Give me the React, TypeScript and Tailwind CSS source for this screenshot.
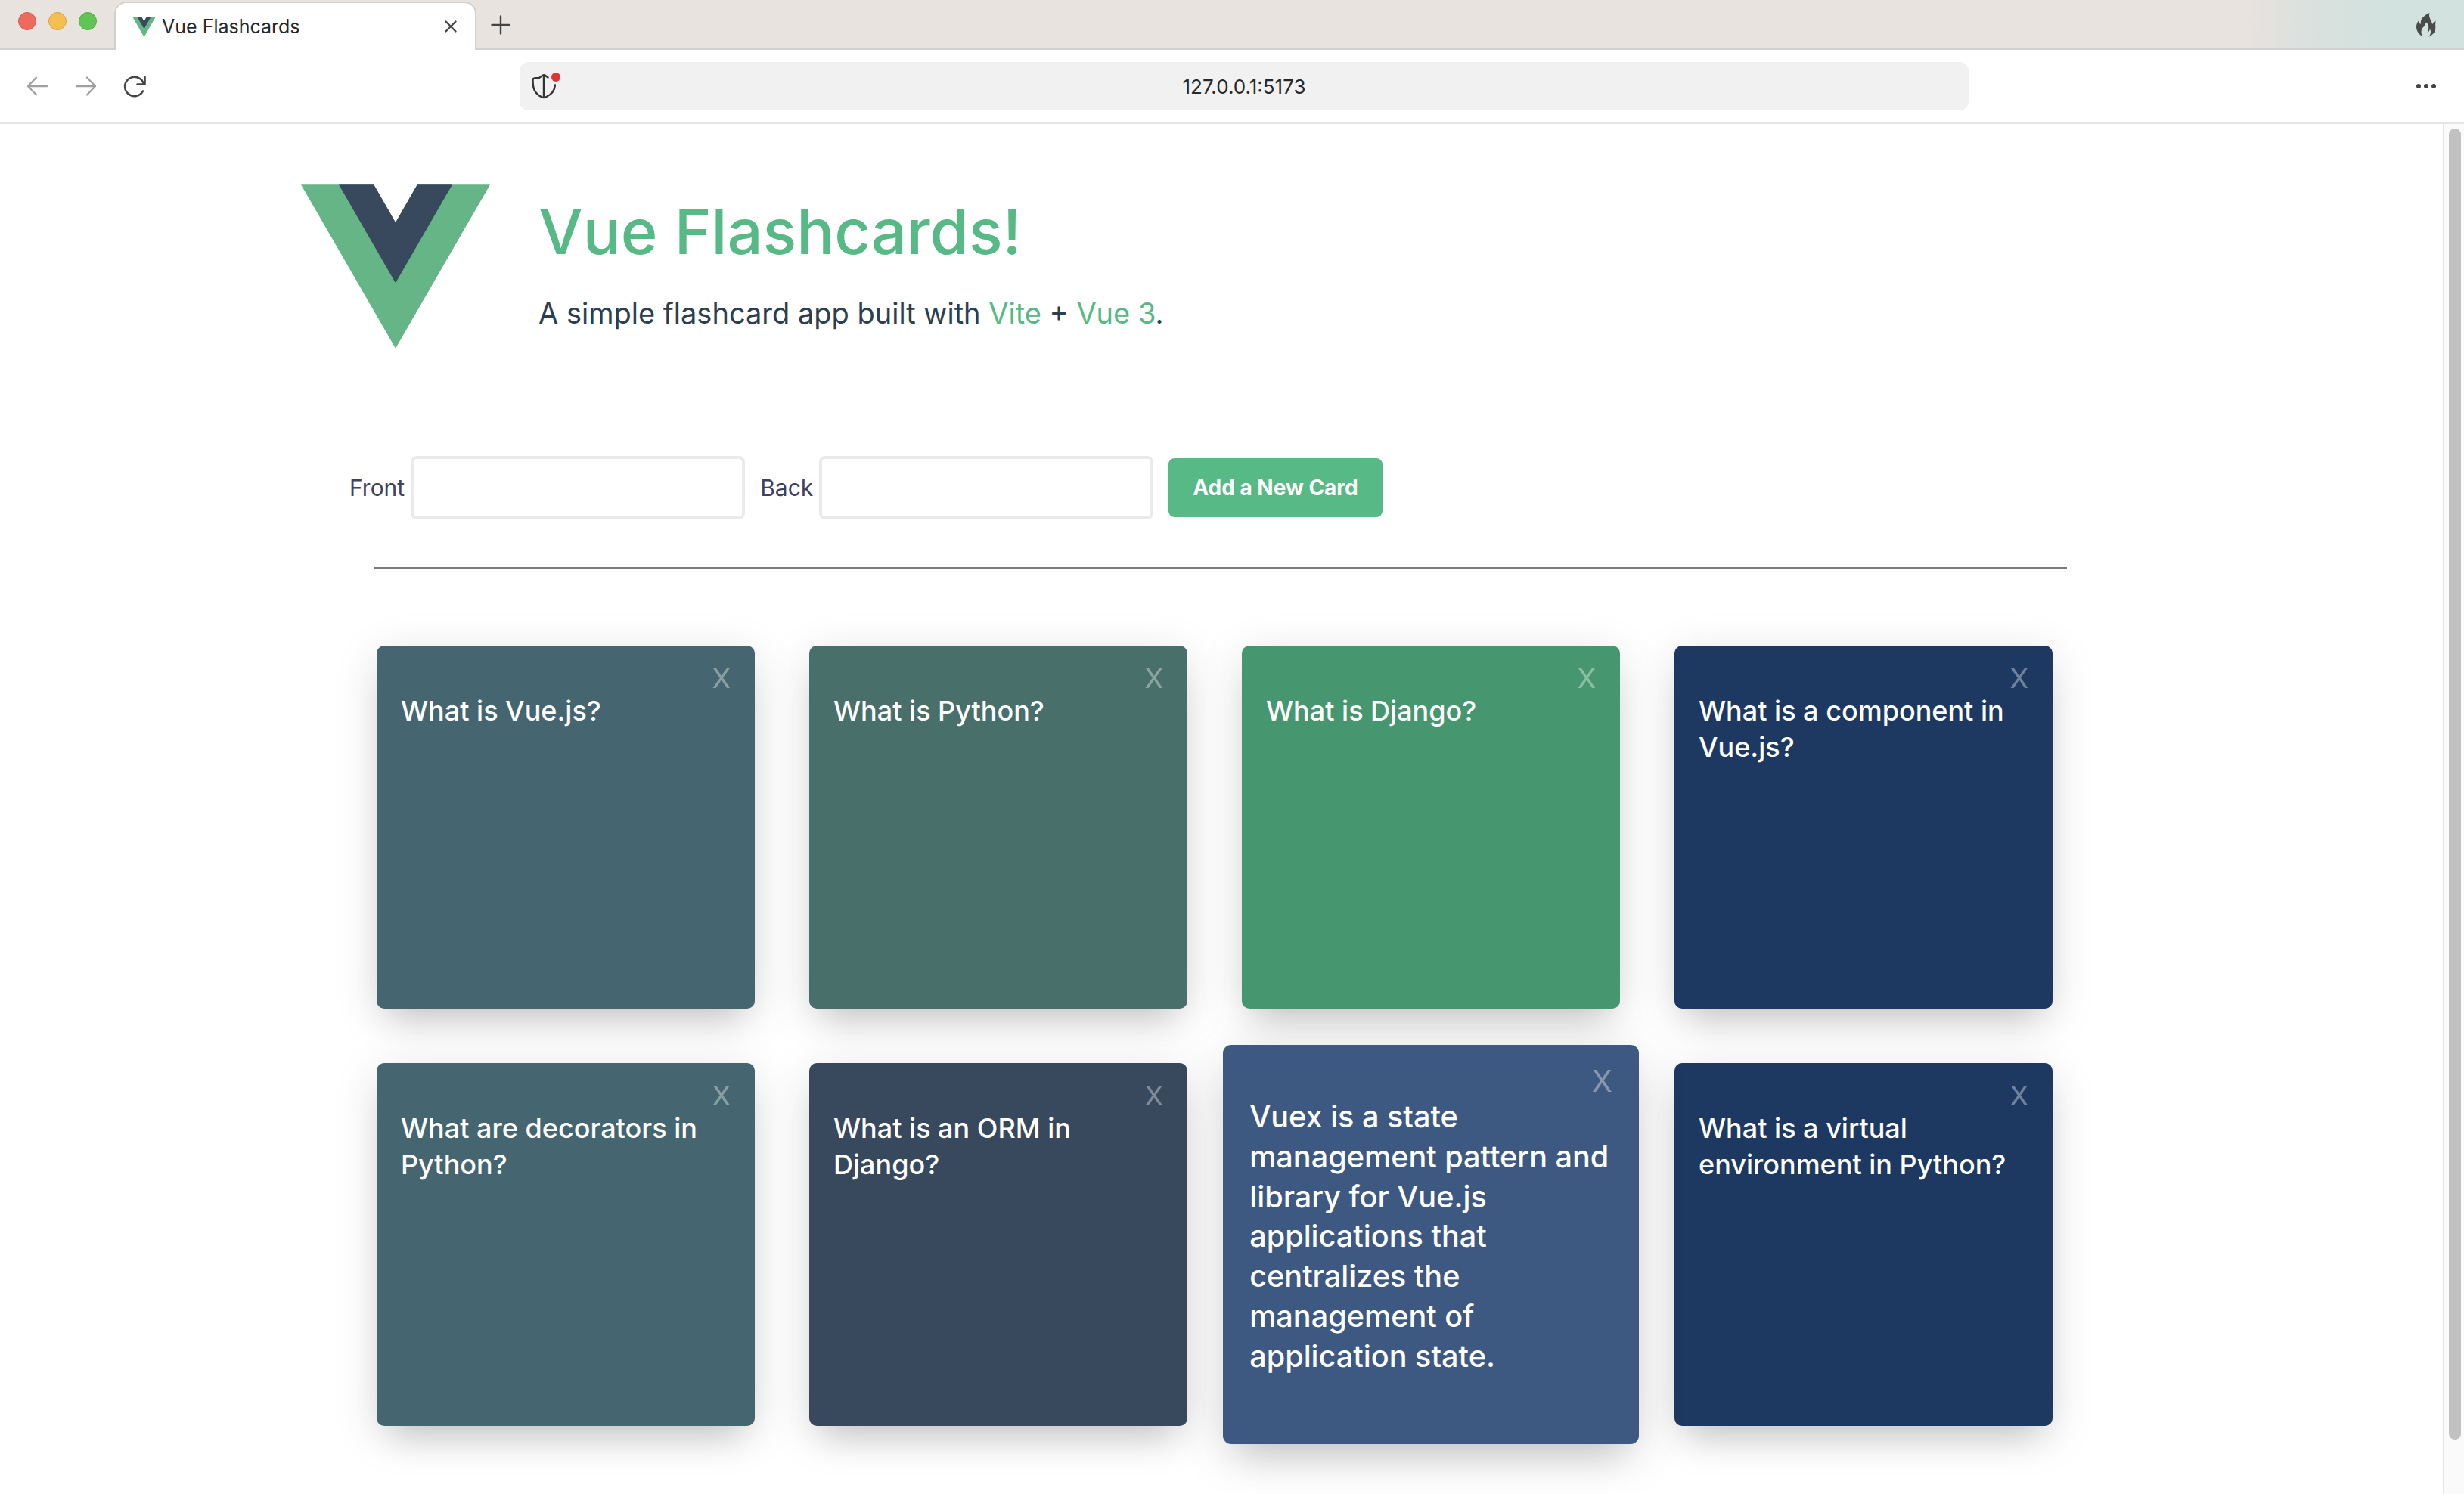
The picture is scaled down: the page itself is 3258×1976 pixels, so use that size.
import type { ReactNode } from "react";
import { useId } from "react";

type Flashcard = { text: string; color: string; flipped?: boolean };

const cards: Flashcard[] = [
  { text: "What is Vue.js?", color: "bg-[#456670]" },
  { text: "What is Python?", color: "bg-[#486f6a]" },
  { text: "What is Django?", color: "bg-[#46976f]" },
  { text: "What is a component in Vue.js?", color: "bg-[#1d3961]" },
  { text: "What are decorators in Python?", color: "bg-[#456670]" },
  { text: "What is an ORM in Django?", color: "bg-[#38485d]" },
  {
    text: "Vuex is a state management pattern and library for Vue.js applications that centralizes the management of application state.",
    color: "bg-[#3e5981]",
    flipped: true,
  },
  { text: "What is a virtual environment in Python?", color: "bg-[#1d3961]" },
];

function VueLogo({ className }: { className: string }) {
  return (
    <svg viewBox="0 0 262 227" className={className} aria-hidden="true">
      <path fill="#65b587" d="M161.1 0 131 52.4 100.9 0H0l131 227L262 0z" />
      <path fill="#38485d" d="M161.1 0 131 52.4 100.9 0H52.4L131 136.2 209.6 0z" />
    </svg>
  );
}

function IconButton({ label, className, children }: { label: string; className: string; children: ReactNode }) {
  return (
    <button type="button" aria-label={label} className={`flex shrink-0 items-center justify-center ${className}`}>
      {children}
    </button>
  );
}

function TabStrip() {
  return (
    <div className="flex h-[66px] bg-linear-to-r from-[#e8e3df] from-91% via-[#d9e0de] via-94% to-[#d2e2de] to-97%">
      <div className="flex w-[151px] shrink-0 items-start gap-4 border-b-2 border-[#d0d0d0] pt-4 pl-6">
        <span className="size-6 rounded-full border border-[#d9584e] bg-[#ed6a5e]" />
        <span className="size-6 rounded-full border border-[#d9a441] bg-[#f4bf50]" />
        <span className="size-6 rounded-full border border-[#4fae3f] bg-[#61c555]" />
      </div>
      <div className="mt-[2px] flex w-[479px] shrink-0 items-center rounded-t-2xl border-2 border-b-0 border-[#d0d0d0] bg-white pr-4 pl-[22px]">
        <VueLogo className="h-[27px] w-[31px]" />
        <span className="ml-2 flex-1 text-[25px] leading-8 text-[#27272a]">Vue Flashcards</span>
        <IconButton label="Close tab" className="size-8">
          <svg viewBox="0 0 32 32" className="size-8" fill="none" stroke="#444" strokeWidth="2.4" strokeLinecap="round">
            <path d="M9.500 9.500l13 13M22.500 9.500l-13 13" />
          </svg>
        </IconButton>
      </div>
      <div className="flex flex-1 items-center justify-between border-b-2 border-[#d0d0d0] pr-8 pl-4">
        <IconButton label="New tab" className="mt-[2px] size-8">
          <svg viewBox="0 0 32 32" className="size-8" fill="none" stroke="#444" strokeWidth="2.4" strokeLinecap="round">
            <path d="M16 4.500v23M4.500 16h23" />
          </svg>
        </IconButton>
        <IconButton label="Fire" className="mt-[2px] size-9">
          <svg viewBox="0 0 26 32" className="h-8 w-[26px]" fill="#4a4a4a">
            <path d="M17.500 0C15 1 9 4.500 6.500 9c-.8 2-.6 4-.9 6C4 14 3.500 12 3.300 10.200 1.500 12 0 15 0 18.500 0 24 3.500 29 9 31.500 6.500 28.500 5.800 25.500 7 22.500c1.300-3.500 5-5.500 5.800-10C15.500 14 16.800 18 16 22.500c-.3 1.500-.8 2.500-1.600 3.500 1.700-.6 3-2 3.600-4.500 2 3 1.300 7-1.800 10.200C21.500 29.500 25 26 25.300 20c.1-3.300-.6-6.500.5-9.500-2 .6-3.800 2.200-4.600 4.800C20.300 10 15.500 6 17.500 0z" />
          </svg>
        </IconButton>
      </div>
    </div>
  );
}

function Toolbar() {
  return (
    <div className="flex h-[98px] items-center border-b-2 border-[#e5e5e5] bg-white px-8">
      <div className="mr-8 flex flex-1 items-center gap-7">
        <IconButton label="Back" className="size-9">
          <svg viewBox="0 0 36 36" className="size-9" fill="none" stroke="#a0a0a0" strokeWidth="2.4" strokeLinecap="round" strokeLinejoin="round">
            <path d="M30 18H5M16 6.500L5 18l11 11.500" />
          </svg>
        </IconButton>
        <IconButton label="Forward" className="size-9">
          <svg viewBox="0 0 36 36" className="size-9" fill="none" stroke="#a0a0a0" strokeWidth="2.4" strokeLinecap="round" strokeLinejoin="round">
            <path d="M5 18h25M19 6.500L30 18 19 29.500" />
          </svg>
        </IconButton>
        <IconButton label="Reload" className="size-9">
          <svg viewBox="0 0 36 36" className="size-9" fill="none" stroke="#444" strokeWidth="2.6" strokeLinecap="round" strokeLinejoin="round">
            <path d="M29 24.500A12.700 12.700 0 1 1 29.500 13.500M31.500 6v9.500h-10" />
          </svg>
        </IconButton>
      </div>
      <div className="relative flex h-16 w-[60%] items-center rounded-xl bg-[#f1f1f1]">
        <div className="absolute left-4">
          <IconButton label="Protections" className="h-10 w-10">
            <svg viewBox="0 0 40 40" className="size-10" fill="none" stroke="#333" strokeWidth="2.4" strokeLinecap="round" strokeLinejoin="round">
              <path d="M21.500 8.500c-2-1.500-3.500-3.200-5.500-3.200s-3.500 2.500-6 3.500c-2.500.8-4.500.2-6.300.6-1.700.4-2.200 1-2.200 2.600 0 11 2 17.500 12 22.500 2 1 3 1 5 0C26.500 31 30.500 26 31 18.500M16 6v29" />
              <circle cx="32" cy="8" r="6" fill="#df3535" stroke="none" />
            </svg>
          </IconButton>
        </div>
        <input
          aria-label="Address"
          defaultValue="127.0.0.1:5173"
          className="h-full w-full bg-transparent px-16 text-center text-[26px] text-[#27272a] outline-none"
        />
      </div>
      <div className="flex flex-1 justify-end">
        <IconButton label="Menu" className="h-9 w-9">
          <svg viewBox="0 0 36 36" className="size-9" fill="#444">
            <circle cx="8" cy="18" r="3" />
            <circle cx="18" cy="18" r="3" />
            <circle cx="28" cy="18" r="3" />
          </svg>
        </IconButton>
      </div>
    </div>
  );
}

function Field({ label }: { label: string }) {
  const id = useId();
  return (
    <div className="flex items-center gap-2">
      <label htmlFor={id} className="text-[30px] leading-10 text-[#41415c]">
        {label}
      </label>
      <input id={id} type="text" className="h-21 w-[442px] rounded-lg border-4 border-[#eaeaea] bg-white px-4 text-[30px]" />
    </div>
  );
}

function Card({ card }: { card: Flashcard }) {
  return (
    <li
      className={`flex h-120 w-125 flex-col rounded-[10px] px-8 pt-6 text-white shadow-[0_12px_60px_rgba(0,0,0,0.13),0_30px_44px_-20px_rgba(0,0,0,0.16)] ${card.color} ${card.flipped ? "scale-110" : ""}`}
    >
      <button type="button" aria-label="Delete card" className="self-end text-[36px] leading-[38px] font-normal text-white/40">
        X
      </button>
      <p className="text-[36px] leading-12 font-medium">{card.text}</p>
    </li>
  );
}

export default function App() {
  return (
    <div className="flex h-screen flex-col overflow-hidden bg-white font-['Inter',sans-serif]">
      <TabStrip />
      <Toolbar />
      <div className="flex min-h-0 flex-1">
        <main className="min-w-0 flex-1 overflow-hidden pr-0.5">
          <div className="mx-auto max-w-[2560px] px-16 pt-20">
            <header className="flex items-start gap-16">
              <VueLogo className="h-[217px] w-[250px] shrink-0" />
              <div className="pt-2">
                <h1 className="text-[83px] leading-[108px] font-medium text-[#57b985]">Vue Flashcards!</h1>
                <p className="mt-[30px] text-[38px] leading-12 text-[#2c3e50]">
                  A simple flashcard app built with{" "}
                  <a href="https://vitejs.dev" className="text-[#57b985]">
                    Vite
                  </a>{" "}
                  +{" "}
                  <a href="https://vuejs.org" className="text-[#57b985]">
                    Vue 3
                  </a>
                  .
                </p>
              </div>
            </header>
            <form className="mt-[142px] flex items-center gap-5 pl-16">
              <Field label="Front" />
              <Field label="Back" />
              <button type="button" className="h-[78px] rounded-lg bg-[#57b985] px-8 text-[28px] font-bold text-white">
                Add a New Card
              </button>
            </form>
            <hr className="mx-auto mt-[63px] w-[92%] border-t-2 border-[#78787a]" />
            <ul className="mt-[102px] flex flex-wrap gap-18 px-[100px]">
              {cards.map((card) => (
                <Card key={card.text} card={card} />
              ))}
            </ul>
          </div>
        </main>
        <div className="w-7 border-l-2 border-[#e5e5e5] bg-[#fafafa] pt-[6px] pl-[6px]">
          <div className="h-[96%] w-4 rounded-full bg-[#c1c1c1]" />
        </div>
      </div>
    </div>
  );
}
